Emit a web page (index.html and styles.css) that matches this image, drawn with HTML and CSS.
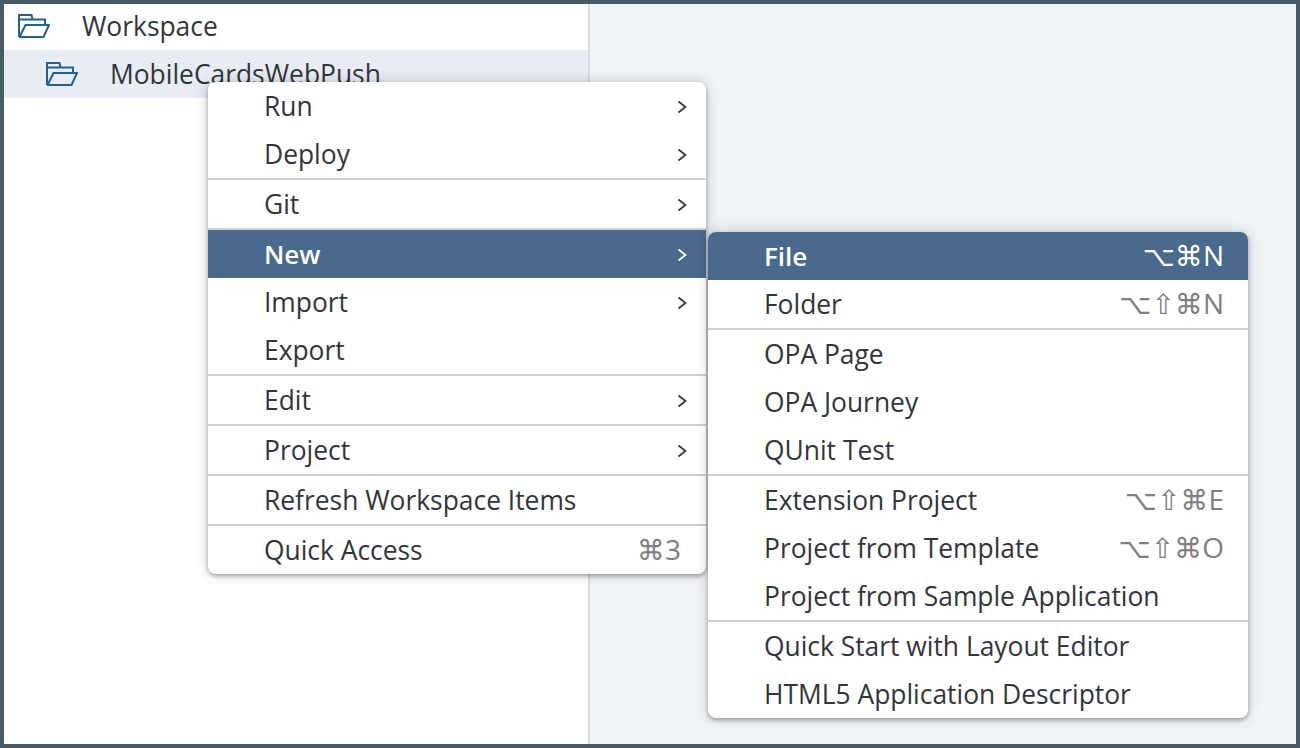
FILE: index.html
```html
<!DOCTYPE html>
<html lang="en">
<head>
    <meta charset="UTF-8">
    <meta name="viewport" content="width=device-width, initial-scale=1.0">
    <title>Workspace</title>
    <link rel="stylesheet" href="styles.css">
</head>
<body>
    <svg class="defs" width="0" height="0">
        <symbol id="folder" viewBox="0 0 32 24">
            <path d="M1 23V1h12.500l1 4.500H27V11M1 5.500h14M1.500 23L7.500 11H31L25.500 23H1" fill="none" stroke="currentColor" stroke-width="2"/>
        </symbol>
        <symbol id="chevron" viewBox="0 0 10 14">
            <path d="M1.500 1.500L8.500 7l-7 5.500" fill="none" stroke="currentColor" stroke-width="1.700"/>
        </symbol>
    </svg>

    <div class="frame">
        <div class="tree">
            <div class="tree-row">
                <svg class="folder"><use href="#folder"/></svg>
                <span>Workspace</span>
            </div>
            <div class="tree-row child selected">
                <svg class="folder"><use href="#folder"/></svg>
                <span>MobileCardsWebPush</span>
            </div>
        </div>
        <div class="content"></div>

        <!-- Context menu -->
        <div class="menu menu-main">
            <div class="item"><span>Run</span><svg class="arrow"><use href="#chevron"/></svg></div>
            <div class="item"><span>Deploy</span><svg class="arrow"><use href="#chevron"/></svg></div>
            <hr>
            <div class="item"><span>Git</span><svg class="arrow"><use href="#chevron"/></svg></div>
            <hr>
            <div class="item active"><span>New</span><svg class="arrow"><use href="#chevron"/></svg></div>
            <div class="item"><span>Import</span><svg class="arrow"><use href="#chevron"/></svg></div>
            <div class="item"><span>Export</span></div>
            <hr>
            <div class="item"><span>Edit</span><svg class="arrow"><use href="#chevron"/></svg></div>
            <hr>
            <div class="item"><span>Project</span><svg class="arrow"><use href="#chevron"/></svg></div>
            <hr>
            <div class="item"><span>Refresh Workspace Items</span></div>
            <hr>
            <div class="item"><span>Quick Access</span><span class="keys">⌘<i>3</i></span></div>
        </div>

        <!-- Submenu of New -->
        <div class="menu menu-sub">
            <div class="item active"><span>File</span><span class="keys">⌥⌘<i>N</i></span></div>
            <div class="item"><span>Folder</span><span class="keys">⌥⇧⌘<i>N</i></span></div>
            <hr>
            <div class="item"><span>OPA Page</span></div>
            <div class="item"><span>OPA Journey</span></div>
            <div class="item"><span>QUnit Test</span></div>
            <hr>
            <div class="item"><span>Extension Project</span><span class="keys">⌥⇧⌘<i>E</i></span></div>
            <div class="item"><span>Project from Template</span><span class="keys">⌥⇧⌘<i>O</i></span></div>
            <div class="item"><span>Project from Sample Application</span></div>
            <hr>
            <div class="item"><span>Quick Start with Layout Editor</span></div>
            <div class="item"><span>HTML5 Application Descriptor</span></div>
        </div>
    </div>
</body>
</html>
```

FILE: styles.css
```css
* {
    box-sizing: border-box;
}
html, body {
    margin: 0;
    padding: 0;
    height: 100%;
}
body {
    font-family: 'Open Sans', 'Noto Sans', sans-serif;
    font-size: 26.4px;
    color: #32363a;
    overflow: hidden;
}
.defs {
    position: absolute;
}
.frame {
    position: relative;
    display: flex;
    height: 748px;
    border: 4px solid #4a5b68;
    background: #f0f3f8;
}
.tree {
    width: 586px;
    background: #fff;
    border-right: 2px solid #d9dee5;
}
.tree-row {
    display: flex;
    align-items: center;
    height: 46px;
    padding: 0 0 2px 14px;
}
.tree-row.child {
    height: 48px;
    padding: 0 0 0 42px;
}
.tree-row.selected {
    background: #e8edf4;
}
.folder {
    width: 32px;
    height: 24px;
    margin-right: 32px;
    color: #27608f;
}
.content {
    flex: 1;
}
.menu {
    position: absolute;
    background: #fff;
    border-radius: 8px;
    box-shadow: 0 2px 4px rgba(0, 0, 0, 0.3), 0 0 14px rgba(0, 0, 0, 0.18);
    overflow: hidden;
}
.menu-main {
    left: 204px;
    top: 78px;
    width: 498px;
}
.menu-sub {
    left: 704px;
    top: 228px;
    width: 540px;
}
.menu hr {
    margin: 0;
    border: none;
    height: 2px;
    background: #cfd1d3;
}
.item {
    display: flex;
    justify-content: space-between;
    align-items: center;
    height: 48px;
    padding: 0 25px 0 56px;
}
.menu-sub .item {
    padding-right: 24px;
}
.item.active {
    background: #496a8c;
    color: #fff;
    font-size: 26px;
    font-weight: 600;
}
.arrow {
    width: 10px;
    height: 14px;
    margin: 2px -6px 0 0;
    color: #32363a;
}
.active .arrow {
    color: #fff;
}
.keys {
    font-family: 'DejaVu Sans', sans-serif;
    font-size: 28px;
    line-height: 1;
    color: #808080;
}
.keys i {
    font-family: 'Open Sans', sans-serif;
    font-size: 28px;
    font-style: normal;
}
.active .keys {
    color: #fff;
    font-weight: 400;
}
```
